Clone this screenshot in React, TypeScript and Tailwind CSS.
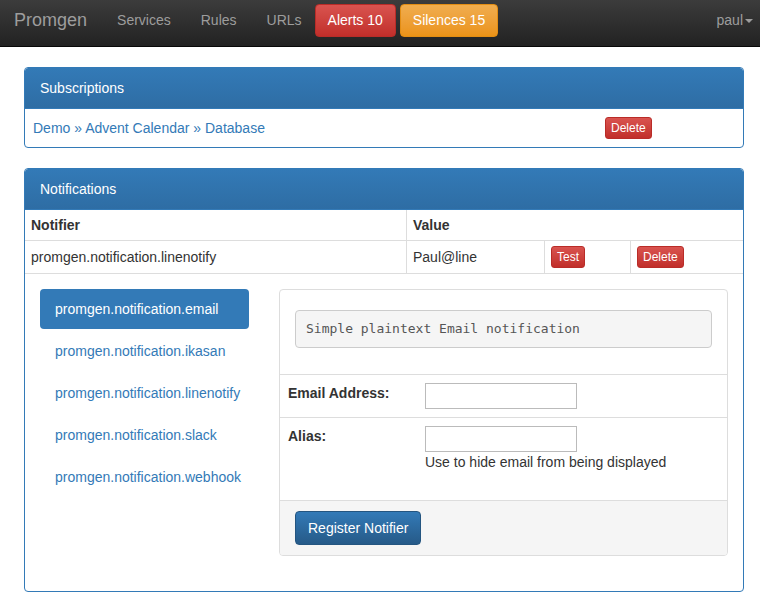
const font = { fontFamily: '"Liberation Sans", Arial, sans-serif' };

function Navbar() {
  return (
    <div className="flex h-[47px] items-center border-b border-[#080808] bg-gradient-to-b from-[#3c3c3c] to-[#222] pb-[5px] pl-[14px] pr-[7px]">
      <span className="mr-[30px] text-[18px] text-[#9d9d9d]">Promgen</span>
      <span className="mr-[30px] text-[14px] text-[#9d9d9d]">Services</span>
      <span className="mr-[30px] text-[14px] text-[#9d9d9d]">Rules</span>
      <span className="mr-[13px] text-[14px] text-[#9d9d9d]">URLs</span>
      <button className="mr-[4px] h-[33px] rounded-[4px] border border-[#b92c28] bg-gradient-to-b from-[#d9534f] to-[#c12e2a] px-[12px] text-[14px] text-white">
        Alerts 10
      </button>
      <button className="h-[33px] rounded-[4px] border border-[#e38d13] bg-gradient-to-b from-[#f0ad4e] to-[#eb9316] px-[12px] text-[14px] text-white">
        Silences 15
      </button>
      <div className="ml-auto flex items-center text-[14px] text-[#9d9d9d]">
        paul
        <span className="ml-[2px] inline-block h-0 w-0 border-x-[4px] border-t-[4px] border-x-transparent border-t-[#9d9d9d]" />
      </div>
    </div>
  );
}

function PanelHeading({ title }: { title: string }) {
  return (
    <div className="flex h-[41px] items-center rounded-t-[3px] border-b border-[#337ab7] bg-gradient-to-b from-[#337ab7] to-[#2e6da4] px-[15px] text-[14px] text-white">
      {title}
    </div>
  );
}

function XsButton({ label }: { label: string }) {
  return (
    <button className="h-[22px] rounded-[3px] border border-[#b92c28] bg-gradient-to-b from-[#d9534f] to-[#c12e2a] px-[5px] text-[12px] leading-none text-white">
      {label}
    </button>
  );
}

const notifiers = [
  'promgen.notification.email',
  'promgen.notification.ikasan',
  'promgen.notification.linenotify',
  'promgen.notification.slack',
  'promgen.notification.webhook',
];

export default function App() {
  return (
    <div className="min-h-screen bg-white text-[14px] text-[#333]" style={font}>
      <Navbar />
      <div className="pl-[24px] pr-[16px] pt-[20px]">
        {/* Subscriptions */}
        <div className="mb-[20px] overflow-hidden rounded-[4px] border border-[#337ab7]">
          <PanelHeading title="Subscriptions" />
          <div className="flex h-[38px] items-center">
            <div className="w-[572px] px-[8px] text-[#337ab7]">Demo » Advent Calendar » Database</div>
            <div className="px-[8px]">
              <XsButton label="Delete" />
            </div>
          </div>
        </div>

        {/* Notifications */}
        <div className="overflow-hidden rounded-[4px] border border-[#337ab7]">
          <PanelHeading title="Notifications" />
          <div className="flex h-[31px] border-b border-[#ddd] font-bold">
            <div className="flex w-[382px] items-center border-r border-[#ddd] px-[6px]">Notifier</div>
            <div className="flex flex-1 items-center px-[6px]">Value</div>
          </div>
          <div className="flex h-[33px] border-b border-[#ddd]">
            <div className="flex w-[382px] items-center border-r border-[#ddd] px-[6px]">
              promgen.notification.linenotify
            </div>
            <div className="flex w-[138px] items-center border-r border-[#ddd] px-[6px]">Paul@line</div>
            <div className="flex w-[86px] items-center border-r border-[#ddd] px-[6px]">
              <XsButton label="Test" />
            </div>
            <div className="flex flex-1 items-center px-[6px]">
              <XsButton label="Delete" />
            </div>
          </div>
          <div className="flex gap-[30px] px-[15px] pb-[35px] pt-[15px]">
            <div className="flex w-[209px] flex-col gap-[2px]">
              {notifiers.map((n, i) => (
                <div
                  key={n}
                  className={
                    i === 0
                      ? 'flex h-[40px] items-center rounded-[4px] bg-[#337ab7] px-[15px] text-white'
                      : 'flex h-[40px] items-center px-[15px] text-[#337ab7]'
                  }
                >
                  {n}
                </div>
              ))}
            </div>
            <div className="flex-1 overflow-hidden rounded-[4px] border border-[#ddd]">
              <div className="px-[15px] pb-[26px] pt-[20px]">
                <pre
                  className="flex h-[38px] items-center rounded-[4px] border border-[#ccc] bg-[#f5f5f5] px-[10px] text-[13px] text-[#555]"
                  style={{ fontFamily: '"DejaVu Sans Mono", "Liberation Mono", monospace' }}
                >
                  Simple plaintext Email notification
                </pre>
              </div>
              <div className="flex h-[43px] border-t border-[#ddd]">
                <div className="w-[145px] px-[8px] pt-[8px] font-bold">Email Address:</div>
                <div className="pt-[8px]">
                  <input className="h-[26px] w-[152px] border border-[#bbb] bg-white" />
                </div>
              </div>
              <div className="flex h-[83px] border-t border-[#ddd]">
                <div className="w-[145px] px-[8px] pt-[8px] font-bold">Alias:</div>
                <div className="pt-[8px]">
                  <input className="block h-[26px] w-[152px] border border-[#bbb] bg-white" />
                  <div>Use to hide email from being displayed</div>
                </div>
              </div>
              <div className="h-[55px] border-t border-[#ddd] bg-[#f5f5f5] px-[15px] pt-[10px]">
                <button className="h-[34px] rounded-[4px] border border-[#245580] bg-gradient-to-b from-[#337ab7] to-[#265a88] px-[12px] text-[14px] text-white">
                  Register Notifier
                </button>
              </div>
            </div>
          </div>
        </div>
      </div>
    </div>
  );
}
